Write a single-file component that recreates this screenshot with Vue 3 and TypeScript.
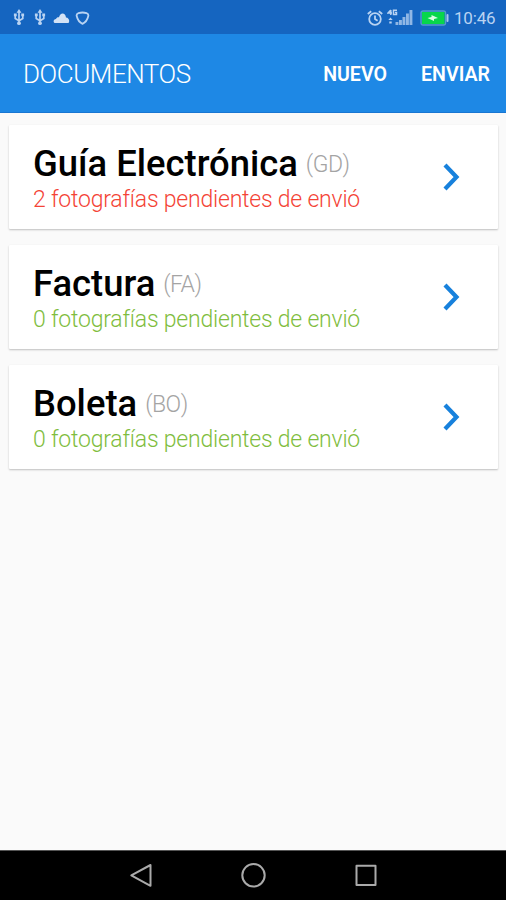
<script setup lang="ts">
interface DocumentType {
  name: string
  code: string
  pending: number
}

const documents: DocumentType[] = [
  { name: 'Guía Electrónica', code: 'GD', pending: 2 },
  { name: 'Factura', code: 'FA', pending: 0 },
  { name: 'Boleta', code: 'BO', pending: 0 },
]
</script>

<template>
  <div class="screen">
    <div class="status">
      <svg v-for="n in 2" :key="n" class="usb" viewBox="0 0 12 18">
        <path d="M6 2v13M2 6v4l4 2.5M10 6v4l-4 2.5" fill="none" stroke="currentColor" stroke-width="1.8" />
        <path d="M6 0l2.6 4H3.4zM.6 4.8h3v3h-3zM8.4 4.8h3v3h-3z" fill="currentColor" />
        <circle cx="6" cy="15" r="2" fill="currentColor" />
      </svg>
      <svg class="cloud" viewBox="0 0 17 10">
        <path d="M1.5 10C-.3 8.5.8 6 3 6c.5-1.6 2-2 3-1.7C7-.8 12.5-.8 13 4.5c3 .2 4 3.5 2.5 5.5z" fill="currentColor" />
      </svg>
      <svg class="shield" viewBox="0 0 14 14">
        <path d="M3 2.2Q7 .8 11 2.2Q13.3 3 12.8 5C12 8.5 10 11.5 7 12.8 4 11.5 2 8.5 1.2 5Q.7 3 3 2.2z" fill="none" stroke="currentColor" stroke-width="1.8" stroke-linejoin="round" />
      </svg>
      <span class="spacer"></span>
      <svg class="alarm" viewBox="0 0 16 16">
        <circle cx="8" cy="9" r="5.8" fill="none" stroke="currentColor" stroke-width="1.8" />
        <path d="M8 5.5V9l2.6 1.8M.8 4L4.2 1.2M15.2 4L11.8 1.2" fill="none" stroke="currentColor" stroke-width="1.8" />
      </svg>
      <svg class="signal" viewBox="0 0 26 17">
        <path d="M3.8 1L1 4h4M3.8 1v5M10 1.2H6.5v4.3H9.5v-2H8" fill="none" stroke="currentColor" stroke-width="1.5" />
        <path d="M3.5 8.5L1.3 11h4.4zM2.3 12.5h2.4v2H2.3z" fill="currentColor" />
        <path d="M8.5 13h2.9v3H8.5zM12 11h2.9v5H12zM15.5 8h2.9v8h-2.9zM19 4.5h2.9V16H19zM22.5 1h2.9v15h-2.9z" fill="currentColor" opacity=".75" />
      </svg>
      <svg class="battery" viewBox="0 0 29 16">
        <rect x="1" y="1" width="24.5" height="14" rx="2" fill="none" stroke="#549ccb" stroke-width="1.4" />
        <rect x="2" y="2" width="22.5" height="12" fill="#08d64b" />
        <rect x="26.5" y="4" width="2" height="8" rx="1" fill="#a5c8ed" />
        <path d="M7.5 8l4-1V5l6.5 3-4 1v2z" fill="#d9ffe3" />
      </svg>
      <span class="clock">10:46</span>
    </div>

    <header class="toolbar">
      <h1 class="title">DOCUMENTOS</h1>
      <button class="action new">NUEVO</button>
      <button class="action send">ENVIAR</button>
    </header>

    <main class="list">
      <article v-for="doc in documents" :key="doc.code" class="card">
        <div class="info">
          <div class="heading">
            <span class="name">{{ doc.name }}</span>
            <span class="code">({{ doc.code }})</span>
          </div>
          <div class="pending" :class="{ waiting: doc.pending > 0 }">
            {{ doc.pending }} fotografías pendientes de envió
          </div>
        </div>
        <svg class="chevron" viewBox="0 0 18 28">
          <path d="M2 2l11.5 12L2 26" fill="none" stroke="currentColor" stroke-width="4.2" />
        </svg>
      </article>
    </main>

    <nav class="navbar">
      <svg viewBox="0 0 26 26">
        <path d="M23.5 3v20.8L4.3 13.4z" />
      </svg>
      <svg viewBox="0 0 26 26">
        <circle cx="13.5" cy="13.3" r="11.2" />
      </svg>
      <svg viewBox="0 0 26 26">
        <rect x="3.5" y="3.7" width="19" height="19.3" />
      </svg>
    </nav>
  </div>
</template>

<style>
body {
  margin: 0;
}
</style>

<style scoped>
.screen {
  display: flex;
  flex-direction: column;
  width: 506px;
  height: 900px;
  overflow: hidden;
  background: #fafafa;
  font-family: Roboto, "Liberation Sans", sans-serif;
}
svg {
  display: block;
  flex: none;
}
.status {
  display: flex;
  align-items: center;
  box-sizing: border-box;
  height: 34px;
  flex: none;
  padding: 1px 10px 0 13px;
  background: #1565c0;
  color: #b9d3f2;
}
.usb {
  width: 12px;
  height: 17px;
  margin-right: 9px;
}
.cloud {
  width: 17px;
  height: 10px;
  margin-left: -2px;
  color: #d3e2f5;
}
.shield {
  width: 15px;
  height: 14px;
  margin-left: 5px;
}
.spacer {
  flex: 1;
}
.alarm {
  width: 16px;
  height: 16px;
}
.signal {
  width: 26px;
  height: 17px;
  margin-left: 4px;
}
.battery {
  width: 29px;
  height: 16px;
  margin-left: 7px;
}
.clock {
  margin-left: 5px;
  font-size: 17px;
  line-height: 20px;
  letter-spacing: -0.2px;
  width: 42px;
  white-space: nowrap;
}
.toolbar {
  display: flex;
  align-items: center;
  box-sizing: border-box;
  height: 79px;
  flex: none;
  padding: 0 16px 0 23px;
  background: #1e88e5;
  border-bottom: 1px solid #1976d2;
  color: #fff;
}
.title {
  flex: 1;
  margin: 0;
  padding-top: 1px;
  font-size: 26px;
  font-weight: 300;
  letter-spacing: -0.45px;
}
.action {
  border: 0;
  padding: 2px 0 0;
  background: none;
  color: inherit;
  font: 600 19.6px Roboto, sans-serif;
}
.send {
  margin-left: 34px;
}
.list {
  display: flex;
  flex: 1;
  flex-direction: column;
  gap: 16px;
  padding: 12px 8px 0 9px;
}
.card {
  display: flex;
  align-items: center;
  box-sizing: border-box;
  height: 104px;
  padding: 0 37px 0 24px;
  border-radius: 1px;
  background: #fff;
  box-shadow: 0 1px 2px rgba(0, 0, 0, 0.24);
}
.info {
  flex: 1;
  white-space: nowrap;
}
.heading {
  display: flex;
  align-items: center;
  gap: 8px;
  height: 42px;
}
.name {
  font-size: 36.4px;
  font-weight: 500;
  line-height: 42px;
  color: #000;
}
.code {
  padding-top: 1px;
  font-size: 23px;
  font-weight: 300;
  line-height: 29px;
  letter-spacing: -0.5px;
  color: #a4a4a4;
}
.pending {
  padding-top: 1px;
  margin-bottom: -1px;
  font-size: 23px;
  font-weight: 300;
  line-height: 27px;
  letter-spacing: -0.21px;
  color: #7fbd3e;
}
.waiting {
  color: #f44336;
}
.chevron {
  width: 18px;
  height: 28px;
  color: #1781dc;
}
.navbar {
  display: flex;
  justify-content: center;
  align-items: center;
  gap: 87px;
  box-sizing: border-box;
  height: 50px;
  flex: none;
  padding-bottom: 2px;
  border-top: 1px solid #555;
  background: #000;
}
.navbar svg {
  width: 26px;
  height: 26px;
  fill: none;
  stroke: #aaa;
  stroke-width: 2;
  stroke-linejoin: round;
}
</style>
